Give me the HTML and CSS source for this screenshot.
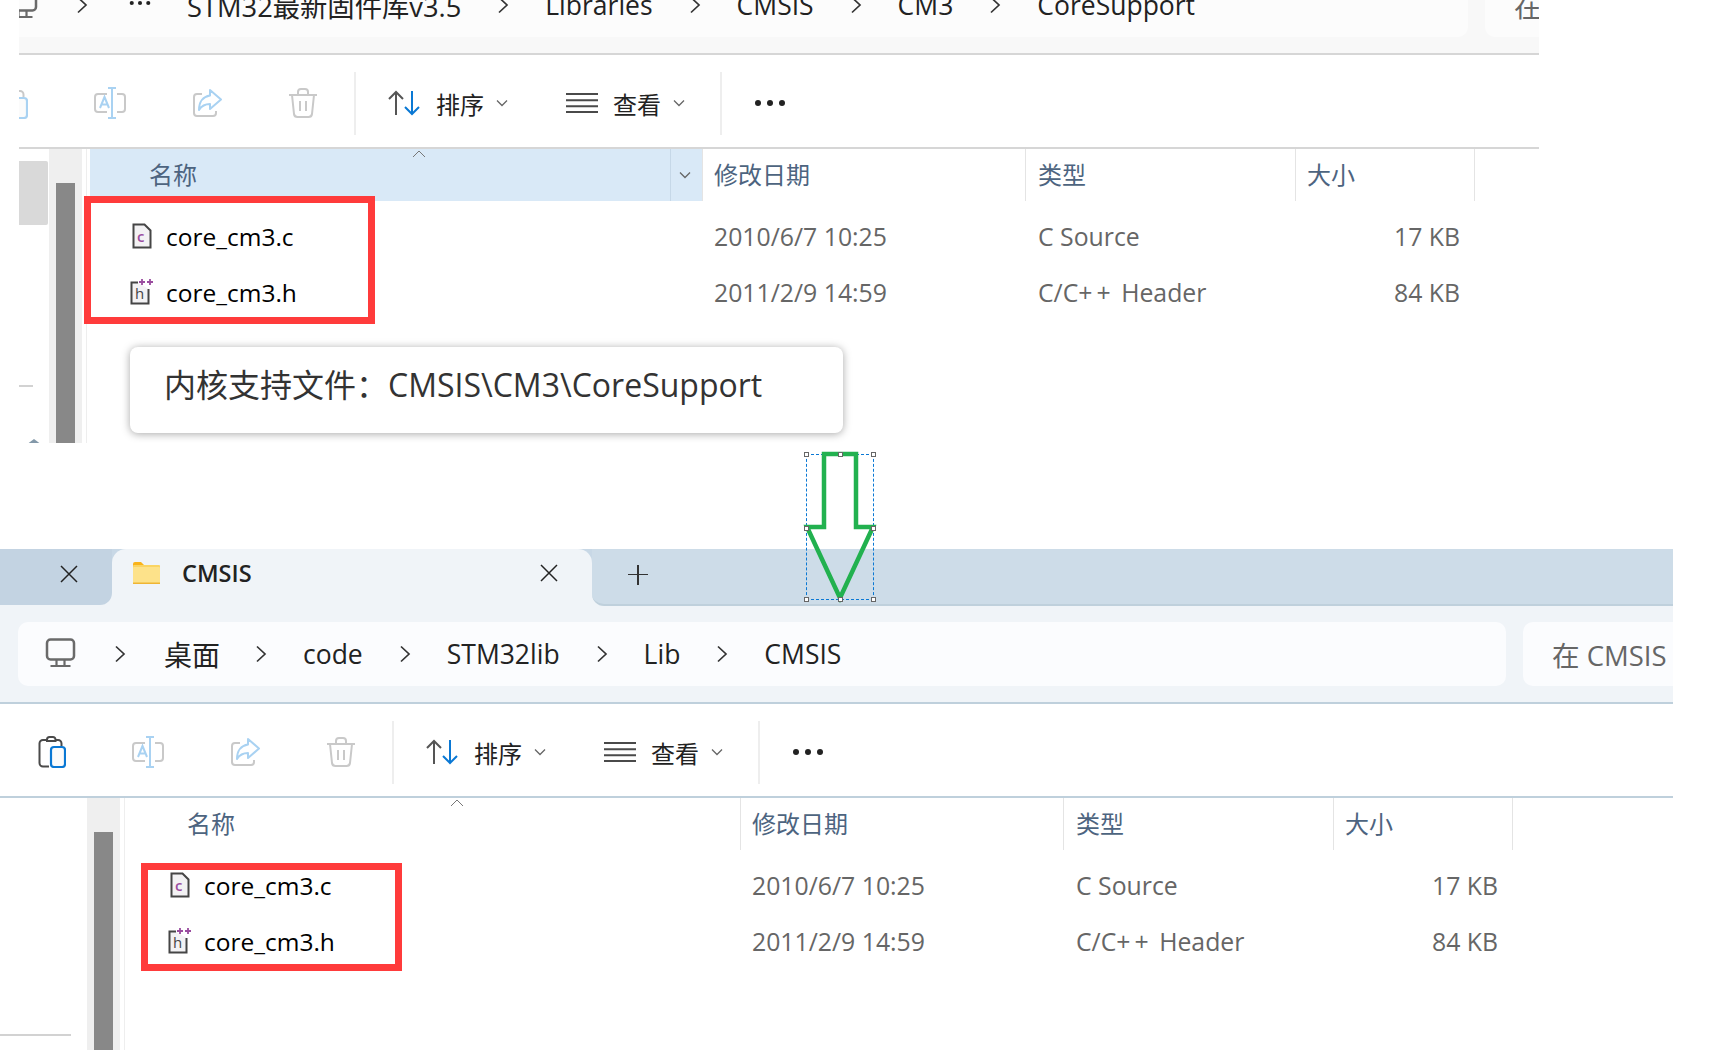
FILE: index.html
```html
<!DOCTYPE html>
<html lang="zh">
<head>
<meta charset="utf-8">
<title>CMSIS</title>
<link rel="stylesheet" href="styles.css">
</head>
<body>
<svg class="defs" width="0" height="0" aria-hidden="true">
  <symbol id="chev" viewBox="0 0 12 18"><path d="M2 1.5 10 9 2 16.500" fill="none" stroke="#333" stroke-width="1.700"/></symbol>
  <symbol id="mini" viewBox="0 0 12 8"><path d="M1 1.500 6 6.500 11 1.500" fill="none" stroke="#666" stroke-width="1.300"/></symbol>
  <symbol id="x" viewBox="0 0 18 18"><path d="M1 1 17 17M17 1 1 17" fill="none" stroke="#222" stroke-width="1.500"/></symbol>
  <symbol id="caret" viewBox="0 0 14 8"><path d="M1 7 7 1 13 7" fill="none" stroke="#777" stroke-width="1"/></symbol>
  <symbol id="clip" viewBox="0 0 28 32"><path class="clip-frame" d="M9 4H5A3.500 3.500 0 0 0 1.500 7.500V27A3.500 3.500 0 0 0 5 30.500H11M9 3.500A2.500 2.500 0 0 1 11.500 1H15A2.500 2.500 0 0 1 17.500 3.500V5H9ZM18 4H20A3.500 3.500 0 0 1 23.500 7.500V10" fill="none" stroke-width="2"/><rect class="clip-sheet" x="13" y="11" width="14" height="20" rx="3" fill="#fbfbfb" stroke-width="2.200"/></symbol>
  <symbol id="rename" viewBox="0 0 32 32"><path d="M13 7H4A3 3 0 0 0 1 10V22A3 3 0 0 0 4 25H13M23 7H28A3 3 0 0 1 31 10V22A3 3 0 0 1 28 25H23" fill="none" stroke="#c9c9c9" stroke-width="2"/><path d="M18 1V31M14 1H22M14 31H22M6 21 10.500 10 15 21M7.500 17.500H13.500" fill="none" stroke="#a9d2f2" stroke-width="2"/></symbol>
  <symbol id="share" viewBox="0 0 30 30"><path d="M10 6H5A3 3 0 0 0 2 9V25A3 3 0 0 0 5 28H21A3 3 0 0 0 24 25V23" fill="none" stroke="#c9c9c9" stroke-width="2"/><path d="M18 2 29 11.500 18 21V16C13 16 9.500 18 7 22 7 14 11 8.500 18 7.500Z" fill="#fff" stroke="#a9d2f2" stroke-width="2" stroke-linejoin="round"/></symbol>
  <symbol id="trash" viewBox="0 0 30 32"><path d="M1 8H29M10 8V5A3 3 0 0 1 13 2H17A3 3 0 0 1 20 5V8M4 8 6 27A3.500 3.500 0 0 0 9.500 30H20.500A3.500 3.500 0 0 0 24 27L26 8M12 14V24M18 14V24" fill="none" stroke="#c9c9c9" stroke-width="2"/></symbol>
  <symbol id="sort" viewBox="0 0 33 26"><path d="M8 25V2M1 9 8 2 15 9" fill="none" stroke="#555" stroke-width="2"/><path d="M24 1V24M17 17 24 24 31 17" fill="none" stroke="#0a78d4" stroke-width="2"/></symbol>
  <symbol id="view" viewBox="0 0 32 20"><path d="M0 1H32M0 7.300H32M0 13.300H32M0 19H32" fill="none" stroke="#4a4a4a" stroke-width="2"/></symbol>
  <symbol id="dots" viewBox="0 0 32 8"><circle cx="4" cy="4" r="3" fill="#222"/><circle cx="16" cy="4" r="3" fill="#222"/><circle cx="28" cy="4" r="3" fill="#222"/></symbol>
  <symbol id="monitor" viewBox="0 0 30 30"><rect x="1.500" y="1.500" width="27" height="20" rx="3.500" fill="none" stroke="#6a6a6a" stroke-width="2.500"/><path d="M11 22V27M19 22V27M5 28H25" fill="none" stroke="#6a6a6a" stroke-width="2.200"/></symbol>
  <symbol id="file-c" viewBox="0 0 20 26"><path d="M1.500 1.500H12.500L18.500 7.500V24.500H1.500Z" fill="#f3f2f4" stroke="#454545" stroke-width="2"/><text x="5" y="19" class="glyph">c</text></symbol>
  <symbol id="file-h" viewBox="0 0 24 26"><path d="M8 3.500H1.500V24.500H18.500V10" fill="#f3f2f4" stroke="#454545" stroke-width="2"/><text x="5" y="20" class="glyph-h">h</text><path d="M9 3H15M12 0V6M17 3H23M20 0V6" fill="none" stroke="#9a4c9f" stroke-width="1.800"/></symbol>
  <symbol id="folder" viewBox="0 0 27 22"><path d="M0 2A2 2 0 0 1 2 0H8L11 3V8H0Z" fill="#f9b31b"/><rect y="3" width="27" height="19" rx="1" fill="#fad463"/><rect y="5" width="27" height="17" rx="1" fill="#fde28a"/><rect y="20.500" width="27" height="1.500" fill="#efb534"/></symbol>
</svg>

<main class="canvas">

  <section class="window window-top theme-grey">
    <div class="inner">
      <div class="address">
        <div class="crumbs">
          <svg class="ic-monitor"><use href="#monitor"/></svg>
          <svg class="ic-chev"><use href="#chev"/></svg>
          <svg class="ic-more"><use href="#dots"/></svg>
          <span class="crumb-mixed">STM32最新固件库v3.5</span>
          <svg class="ic-chev"><use href="#chev"/></svg>
          <span>Libraries</span>
          <svg class="ic-chev"><use href="#chev"/></svg>
          <span>CMSIS</span>
          <svg class="ic-chev"><use href="#chev"/></svg>
          <span>CM3</span>
          <svg class="ic-chev"><use href="#chev"/></svg>
          <span>CoreSupport</span>
        </div>
        <div class="search">在</div>
      </div>
      <div class="tools">
        <div class="tool-group">
          <svg class="ic-clip"><use href="#clip"/></svg>
          <svg class="ic-rename"><use href="#rename"/></svg>
          <svg class="ic-share"><use href="#share"/></svg>
          <svg class="ic-trash"><use href="#trash"/></svg>
        </div>
        <i class="sep sep-a"></i>
        <div class="tool"><svg class="ic-sort"><use href="#sort"/></svg><span>排序</span><svg class="ic-mini"><use href="#mini"/></svg></div>
        <div class="tool tool-view"><svg class="ic-view"><use href="#view"/></svg><span>查看</span><svg class="ic-mini"><use href="#mini"/></svg></div>
        <i class="sep sep-b"></i>
        <svg class="ic-dots"><use href="#dots"/></svg>
      </div>
      <div class="content">
        <div class="side">
          <div class="side-thumb"></div>
          <div class="side-line"></div>
          <div class="side-mark"></div>
        </div>
        <div class="track"><div class="thumb thumb-top"></div></div>
        <div class="list">
          <div class="cols head">
            <div class="col-name active">名称<svg class="ic-caret"><use href="#caret"/></svg><span class="split"><svg class="ic-mini"><use href="#mini"/></svg></span></div>
            <div class="col-date">修改日期</div>
            <div class="col-type">类型</div>
            <div class="col-size">大小</div>
          </div>
          <div class="rows">
            <div class="cols row">
              <div class="col-name"><svg class="ic-file"><use href="#file-c"/></svg>core_cm3.c</div>
              <div class="col-date">2010/6/7 10:25</div>
              <div class="col-type">C Source</div>
              <div class="col-size">17 KB</div>
            </div>
            <div class="cols row">
              <div class="col-name"><svg class="ic-file"><use href="#file-h"/></svg>core_cm3.h</div>
              <div class="col-date">2011/2/9 14:59</div>
              <div class="col-type">C/C<span class="pp">++</span> Header</div>
              <div class="col-size">84 KB</div>
            </div>
          </div>
        </div>
        <div class="mark mark-top"></div>
        <div class="callout">内核支持文件：CMSIS\CM3\CoreSupport</div>
      </div>
    </div>
  </section>

  <section class="window window-bottom theme-blue">
    <div class="inner">
      <div class="tabs">
        <div class="tab-prev"><svg class="ic-x"><use href="#x"/></svg></div>
        <div class="tab-on">
          <svg class="ic-folder"><use href="#folder"/></svg>
          <span class="tab-title">CMSIS</span>
          <svg class="ic-x"><use href="#x"/></svg>
        </div>
        <div class="tab-rest"><span class="plus"></span></div>
      </div>
      <div class="address">
        <div class="crumbs">
          <svg class="ic-monitor"><use href="#monitor"/></svg>
          <svg class="ic-chev"><use href="#chev"/></svg>
          <span class="crumb-cjk">桌面</span>
          <svg class="ic-chev"><use href="#chev"/></svg>
          <span>code</span>
          <svg class="ic-chev"><use href="#chev"/></svg>
          <span>STM32lib</span>
          <svg class="ic-chev"><use href="#chev"/></svg>
          <span>Lib</span>
          <svg class="ic-chev"><use href="#chev"/></svg>
          <span>CMSIS</span>
        </div>
        <div class="search">在 CMSIS</div>
      </div>
      <div class="tools">
        <div class="tool-group">
          <svg class="ic-clip"><use href="#clip"/></svg>
          <svg class="ic-rename"><use href="#rename"/></svg>
          <svg class="ic-share"><use href="#share"/></svg>
          <svg class="ic-trash"><use href="#trash"/></svg>
        </div>
        <i class="sep sep-a"></i>
        <div class="tool"><svg class="ic-sort"><use href="#sort"/></svg><span>排序</span><svg class="ic-mini"><use href="#mini"/></svg></div>
        <div class="tool tool-view"><svg class="ic-view"><use href="#view"/></svg><span>查看</span><svg class="ic-mini"><use href="#mini"/></svg></div>
        <i class="sep sep-b"></i>
        <svg class="ic-dots"><use href="#dots"/></svg>
      </div>
      <div class="content">
        <div class="side"><div class="side-line"></div></div>
        <div class="track"><div class="thumb"></div></div>
        <div class="list">
          <div class="cols head">
            <div class="col-name">名称<svg class="ic-caret"><use href="#caret"/></svg></div>
            <div class="col-date">修改日期</div>
            <div class="col-type">类型</div>
            <div class="col-size">大小</div>
          </div>
          <div class="rows">
            <div class="cols row">
              <div class="col-name"><svg class="ic-file"><use href="#file-c"/></svg>core_cm3.c</div>
              <div class="col-date">2010/6/7 10:25</div>
              <div class="col-type">C Source</div>
              <div class="col-size">17 KB</div>
            </div>
            <div class="cols row">
              <div class="col-name"><svg class="ic-file"><use href="#file-h"/></svg>core_cm3.h</div>
              <div class="col-date">2011/2/9 14:59</div>
              <div class="col-type">C/C<span class="pp">++</span> Header</div>
              <div class="col-size">84 KB</div>
            </div>
          </div>
        </div>
        <div class="mark mark-bottom"></div>
      </div>
    </div>
  </section>

  <div class="arrow">
    <svg class="arrow-shape" viewBox="0 0 68 146"><path d="M18 0H50V73H67L34 144 1 73H18Z" fill="none" stroke="#22b14f" stroke-width="4.500"/></svg>
    <i class="handle h-tl"></i><i class="handle h-tc"></i><i class="handle h-tr"></i>
    <i class="handle h-ml"></i><i class="handle h-mr"></i>
    <i class="handle h-bl"></i><i class="handle h-bc"></i><i class="handle h-br"></i>
  </div>

</main>
</body>
</html>
```

FILE: styles.css
```css
* { box-sizing: border-box; }
html, body { margin: 0; padding: 0; background: #fff; }
body {
  font-family: "Open Sans", "Noto Sans CJK SC", sans-serif;
  color: #111;
}
.defs { position: absolute; }
.glyph { font: 600 15px "Open Sans", sans-serif; fill: #9a4c9f; }
.glyph-h { font: 15px "Open Sans", sans-serif; fill: #454545; }
.clip-frame { stroke: var(--paste-frame); }
.clip-sheet { stroke: var(--paste-sheet); }

.canvas { position: relative; width: 1714px; height: 1052px; overflow: hidden; background: #fff; }
.window { position: absolute; overflow: hidden; background: #fff; }
.window-top { left: 19px; top: 0; width: 1520px; height: 443px; }
.window-bottom { left: 0; top: 549px; width: 1673px; height: 501px; }
.inner { width: 1673px; }
.window-top .inner { margin-left: -57px; margin-top: -43px; }

.theme-grey { --chrome: #f8f8f8; --field: #fcfcfc; --rule: #d6d6d6; --paste-frame: #c9c9c9; --paste-sheet: #a9d2f2; }
.theme-blue { --chrome: #f0f4f8; --field: #fbfcfe; --rule: #bfd0dc; --paste-frame: #4a4a4a; --paste-sheet: #0a78d4; }

/* tabs */
.tabs { display: flex; height: 57px; background: linear-gradient(#c8d8e6 50%, #f0f4f8 50%); }
.tab-prev {
  width: 112px; height: 56px; padding: 0 0 6px 60px;
  display: flex; align-items: center;
  background: #c3d3e2; border-bottom-right-radius: 12px;
}
.tab-on {
  width: 480px; height: 57px; display: flex; align-items: center;
  padding: 0 34px 9px 21px;
  background: #f0f4f8; border-radius: 14px 14px 0 0;
}
.tab-title { margin-left: 22px; flex: 1; font-size: 23.500px; font-weight: 600; color: #222; }
.tab-rest {
  flex: 1; height: 57px; padding: 0 0 4px 36px;
  display: flex; align-items: center;
  background: #cddce8; border-bottom: 2px solid var(--rule); border-bottom-left-radius: 12px;
}
.plus { position: relative; width: 20px; height: 20px; display: block; }
.plus::before, .plus::after { content: ""; position: absolute; background: #333; }
.plus::before { left: 0; right: 0; top: 9px; height: 1.500px; }
.plus::after { top: 0; bottom: 0; left: 9px; width: 1.500px; }

/* address */
.address {
  height: 98px; display: flex; gap: 17px; padding: 16px 0 0 18px;
  background: var(--chrome); border-bottom: 2px solid var(--rule);
}
.crumbs {
  width: 1488px; height: 64px; padding-left: 25px;
  display: flex; align-items: center; gap: 36px;
  background: var(--field); border-radius: 10px;
  font-size: 26.500px; color: #222; white-space: nowrap;
}
.crumb-cjk { font-size: 28px; margin-left: 2px; margin-right: -1px; }
.crumb-mixed { font-size: 27.300px; }
.search {
  flex: 1; height: 64px; padding-left: 29px;
  display: flex; align-items: center; overflow: hidden;
  background: var(--field); border-radius: 10px 0 0 10px;
  font-size: 27.500px; color: #666; white-space: nowrap;
}

/* toolbar */
.tools { height: 94px; padding: 4px 0 0 38px; display: flex; align-items: center; border-bottom: 2px solid var(--rule); font-size: 24px; color: #222; }
.tool-group { display: flex; align-items: center; gap: 66px; }
.sep { display: block; width: 2px; height: 63px; background: #eee; }
.sep-a { margin: 0 32px 0 36px; }
.sep-b { margin: 0 32px 0 35px; }
.tool { display: flex; align-items: center; }
.tool-view { margin-left: 58px; }
.tool span { margin-left: 15px; }
.ic-clip { width: 28px; height: 32px; }
.ic-rename { width: 32px; height: 32px; }
.ic-share { width: 30px; height: 30px; }
.ic-trash { width: 30px; height: 32px; }
.ic-sort { width: 33px; height: 26px; }
.ic-view { width: 32px; height: 20px; }
.ic-mini { width: 12px; height: 8px; margin-left: 12px; }
.ic-dots { width: 32px; height: 8px; }
.ic-monitor { width: 35px; height: 30px; flex: none; margin-top: -3px; }
.ic-chev { width: 12px; height: 18px; flex: none; }
.ic-more { width: 22px; height: 6px; flex: none; margin-left: 5px; margin-top: -4px; }
.ic-x { width: 18px; height: 18px; flex: none; }
.ic-folder { width: 27px; height: 22px; flex: none; }

/* content */
.content { position: relative; height: 300px; display: flex; }
.window-bottom .content { height: 260px; }
.side { position: relative; width: 87px; }
.side-thumb { position: absolute; left: 57px; top: 12px; width: 29px; height: 64px; background: #d9d9d9; border-radius: 0 2px 2px 0; }
.side-line { position: absolute; left: 0; top: 236px; width: 71px; height: 2px; background: #d2d2d2; }
.side-mark { position: absolute; left: 64px; top: 290px; width: 0; height: 0; border: 8px solid transparent; border-top: 0; border-bottom: 6px solid #8398a9; }
.track { width: 33px; padding: 34px 7px 0; background: #efefef; }
.thumb { height: 100%; background: #888; }
.list { flex: 1; margin-left: 4px; padding-left: 3px; border-left: 1px solid #eee; }

.cols { display: grid; grid-template-columns: 612px 323px 270px 180px; }
.head { height: 51px; font-size: 24px; color: #4d6480; line-height: 52px; }
.head > div { position: relative; padding-left: 11px; }
.head .col-name { padding-left: 59px; }
.head .col-date, .head .col-type, .head .col-size { border-left: 1px solid #e4e4e4; }
.head .col-size { border-right: 1px solid #e4e4e4; }
.head .col-type { padding-left: 12px; }
.active { background: #d9e9f7; }
.ic-caret { position: absolute; left: 322px; top: 1px; width: 14px; height: 8px; }
.split { position: absolute; right: 0; top: 0; bottom: 0; width: 32px; padding-right: 4px; display: flex; align-items: center; justify-content: center; border-left: 1px solid #c6d8e8; }
.split .ic-mini { margin: 0; }

.rows { padding-top: 8px; }
.row { height: 56px; align-items: center; font-size: 24.800px; color: #666; }
.row .col-name { display: flex; align-items: center; padding-left: 40px; font-size: 24.500px; color: #000; }
.row .col-date { padding-left: 12px; }
.row .col-type { padding-left: 13px; }
.row .col-size { text-align: right; padding-right: 15px; }
.pp { letter-spacing: 4px; }
.ic-file { width: 24px; height: 26px; margin-right: 12px; flex: none; }

.mark { position: absolute; border: 7px solid #ff3b3b; }
.mark-top { left: 122px; top: 47px; width: 291px; height: 128px; }
.mark-bottom { left: 141px; top: 65px; width: 261px; height: 108px; }
.callout {
  position: absolute; left: 168px; top: 198px; width: 713px; height: 86px;
  padding: 0 0 14px 34px; display: flex; align-items: center;
  background: #fff; border-radius: 8px;
  box-shadow: 0 1px 8px rgba(0, 0, 0, .35);
  font-size: 32px; color: #333; white-space: nowrap;
}

/* arrow */
.arrow { position: absolute; left: 806px; top: 454px; width: 68px; height: 146px; border: 1px dashed #0a78d4; }
.arrow-shape { position: absolute; left: -1px; top: -1px; width: 68px; height: 146px; overflow: visible; }
.handle { position: absolute; width: 5px; height: 5px; background: #fff; border: 1px solid #666; }
.h-tl { left: -3px; top: -3px; }
.h-tc { left: 31px; top: -3px; }
.h-tr { right: -3px; top: -3px; }
.h-ml { left: -3px; top: 71px; }
.h-mr { right: -3px; top: 71px; }
.h-bl { left: -3px; bottom: -3px; }
.h-bc { left: 31px; bottom: -3px; }
.h-br { right: -3px; bottom: -3px; }
```
